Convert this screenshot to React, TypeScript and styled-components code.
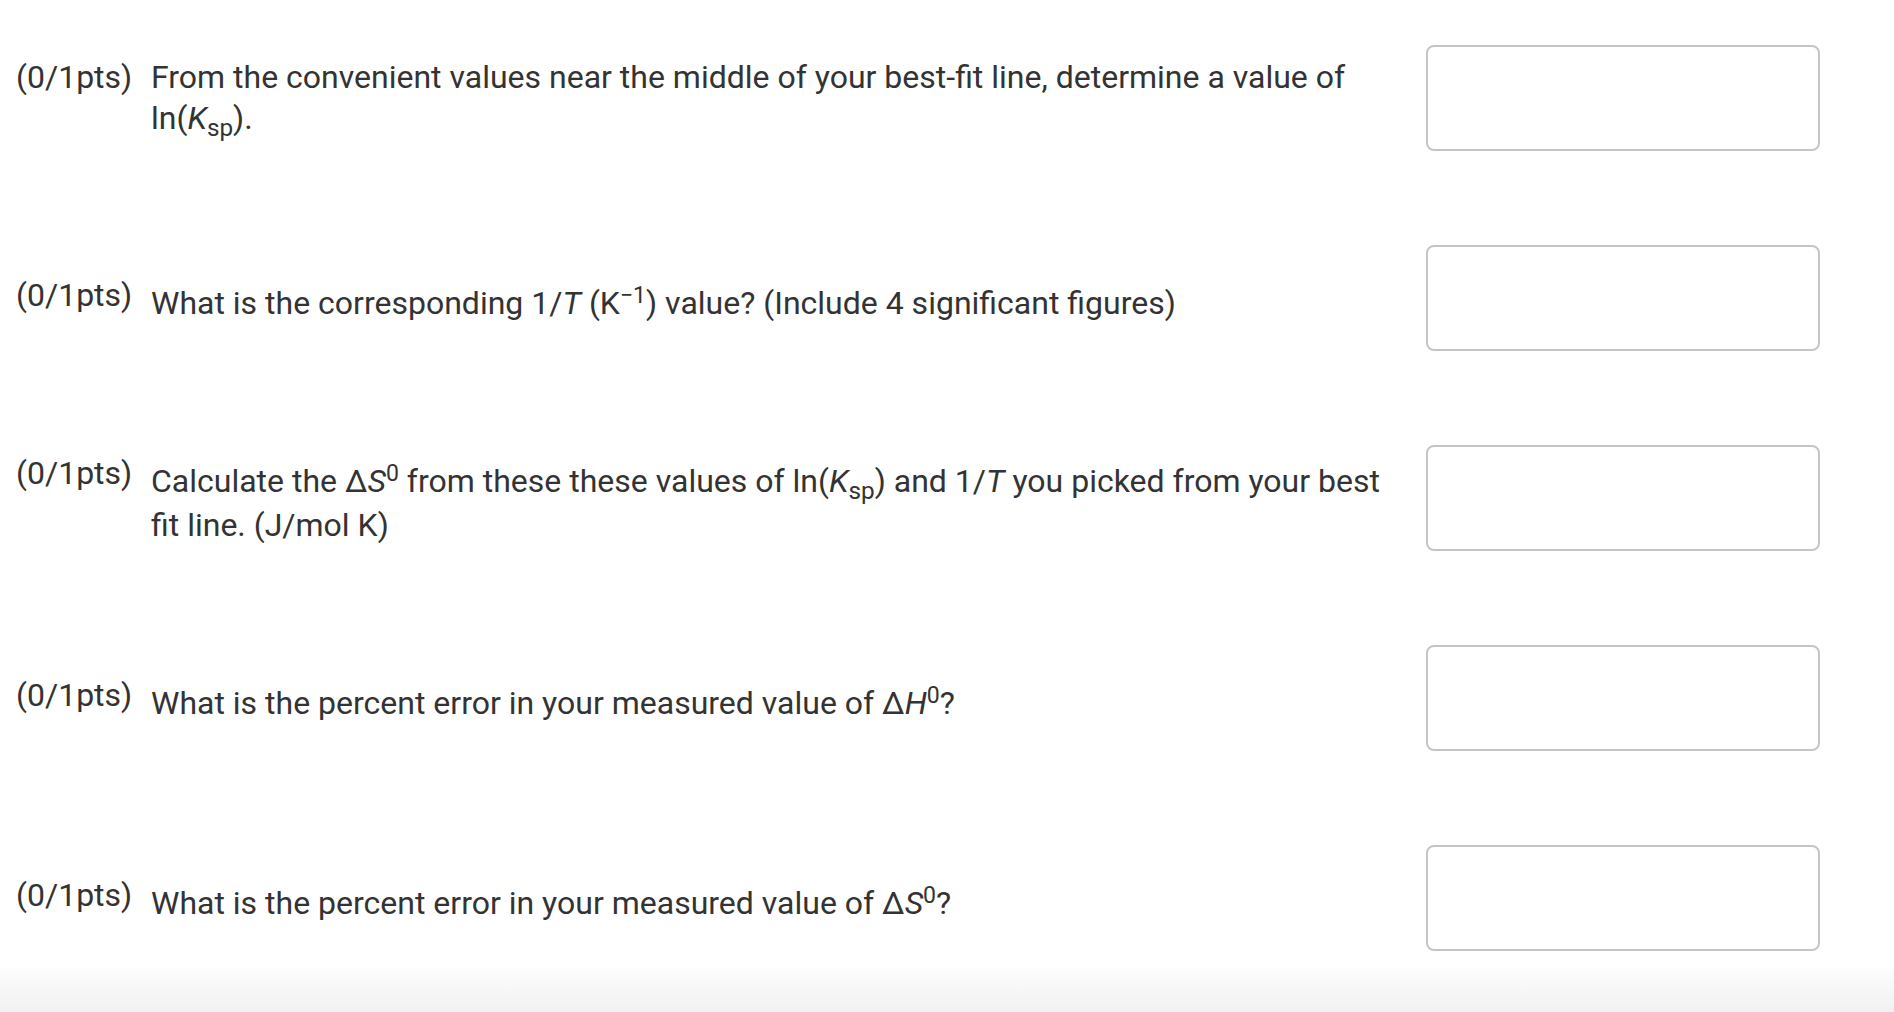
import React from "react";
import styled, { createGlobalStyle } from "styled-components";

const GlobalStyle = createGlobalStyle`
  html, body {
    margin: 0;
    padding: 0;
    background: #ffffff;
  }
  body {
    font-family: Roboto, "Noto Sans", "Liberation Sans", sans-serif;
    color: #333333;
  }
`;

const Page = styled.div`
  min-height: 100vh;
  display: flex;
  flex-direction: column;
  box-sizing: border-box;
`;

const List = styled.div`
  display: flex;
  flex-direction: column;
  gap: 94px;
  padding: 45px 74px 0 16px;
`;

const Row = styled.div`
  display: flex;
  align-items: center;
  gap: 23px;
`;

const Question = styled.div`
  flex: 1;
  display: flex;
  align-items: flex-start;
  padding-top: 3px;
  font-size: 32px;
  line-height: 41px;
  color: #333333;
`;

const Points = styled.span`
  flex: 0 0 135px;
  white-space: nowrap;
`;

const Prompt = styled.div`
  flex: 1;
`;

const Sub = styled.sub`
  font-size: 0.76em;
  line-height: 1.2;
  vertical-align: -0.3em;
`;

const Sup = styled.sup`
  font-size: 0.72em;
  vertical-align: 0.47em;
`;

const Var = styled.i`
  font-style: italic;
`;

const AnswerBox = styled.div`
  flex: 0 0 394px;
  height: 106px;
  box-sizing: border-box;
  border: 2px solid #c5c5c5;
  border-radius: 8px;
  background: #ffffff;
`;

const Footer = styled.div`
  margin-top: auto;
  height: 48px;
  background: linear-gradient(to bottom, #ffffff 0%, #f6f6f6 60%, #f1f1f1 100%);
`;

const Ksp = () => (
  <>
    ln(<Var>K</Var>
    <Sub>sp</Sub>)
  </>
);

const items: React.ReactNode[] = [
  <>
    From the convenient values near the middle of your best-fit line, determine a value of{" "}
    <Ksp />.
  </>,
  <>
    What is the corresponding 1/<Var>T</Var> (K<Sup>−1</Sup>) value? (Include 4 significant figures)
  </>,
  <>
    Calculate the Δ<Var>S</Var>
    <Sup>0</Sup> from these these values of <Ksp /> and 1/<Var>T</Var> you picked from your best fit
    line. (J/mol K)
  </>,
  <>
    What is the percent error in your measured value of Δ<Var>H</Var>
    <Sup>0</Sup>?
  </>,
  <>
    What is the percent error in your measured value of Δ<Var>S</Var>
    <Sup>0</Sup>?
  </>,
];

export default function App() {
  return (
    <Page>
      <GlobalStyle />
      <List>
        {items.map((content, i) => (
          <Row key={i}>
            <Question>
              <Points>(0/1pts)</Points>
              <Prompt>{content}</Prompt>
            </Question>
            <AnswerBox />
          </Row>
        ))}
      </List>
      <Footer />
    </Page>
  );
}
